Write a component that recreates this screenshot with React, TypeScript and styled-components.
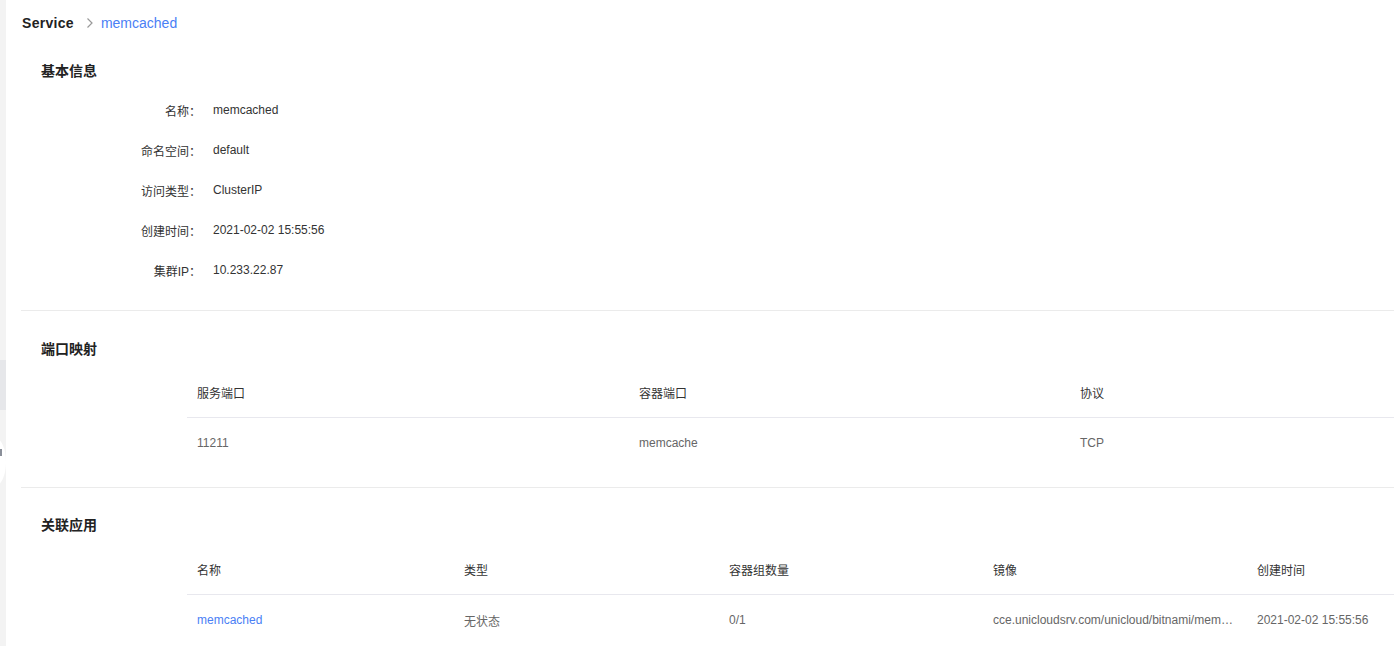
import React from "react";
import styled, { createGlobalStyle } from "styled-components";

const GlobalStyle = createGlobalStyle`
  html, body {
    margin: 0;
    padding: 0;
    overflow: hidden;
    background: #fff;
  }
  body {
    font-family: "Liberation Sans", Arial, "Noto Sans CJK SC", sans-serif;
    font-size: 12px;
    color: #333;
  }
`;

const Layout = styled.div`
  display: flex;
  width: 100vw;
  height: 100vh;
  overflow: hidden;
`;

const Rail = styled.div`
  position: relative;
  width: 6px;
  flex-shrink: 0;
  background: #f3f3f3;
  display: flex;
  flex-direction: column;
`;

const RailGap = styled.div<{ $h: number }>`
  height: ${(p) => p.$h}px;
`;

const RailActive = styled.div`
  height: 50px;
  background: #e6e7ea;
`;

const RailToggle = styled.div`
  position: absolute;
  top: 438px;
  left: -16px;
  width: 22px;
  height: 48px;
  border-radius: 50%;
  background: #fff;
  &::after {
    content: "";
    position: absolute;
    right: 4px;
    top: 11px;
    width: 2px;
    height: 7px;
    background: #8a8f99;
  }
`;

const Main = styled.div`
  flex: 1;
  min-width: 0;
  background: #fff;
`;

const Breadcrumb = styled.div`
  display: flex;
  align-items: center;
  height: 46px;
  padding-left: 16px;
  font-size: 14px;
`;

const CrumbRoot = styled.span`
  font-weight: 700;
  color: #222;
  letter-spacing: 0.3px;
`;

const CrumbSep = styled.span`
  display: flex;
  align-items: center;
  margin: 0 7px 0 12px;
  color: #999;
`;

const CrumbCurrent = styled.span`
  color: #4a80f5;
`;

const Section = styled.section<{ $top: number; $bottom?: number; $line?: boolean }>`
  margin-left: 15px;
  padding-top: ${(p) => p.$top}px;
  padding-bottom: ${(p) => p.$bottom ?? 0}px;
  border-top: ${(p) => (p.$line ? "1px solid #ebebeb" : "none")};
`;

const SectionTitle = styled.h3<{ $gap: number }>`
  margin: 0 0 ${(p) => p.$gap}px 0;
  padding-left: 20px;
  height: 20px;
  line-height: 20px;
  font-size: 14px;
  font-weight: 700;
  color: #222;
  font-family: "Noto Sans CJK SC", "Liberation Sans", sans-serif;
`;

const InfoRow = styled.div`
  display: flex;
  align-items: center;
  height: 40px;
  padding-top: 2px;
  box-sizing: border-box;
`;

const InfoLabel = styled.div`
  width: 180px;
  text-align: right;
  color: #333;
`;

const InfoValue = styled.div`
  padding-left: 12px;
  color: #333;
`;

const TableWrap = styled.div`
  margin-left: 166px;
`;

const Table = styled.table`
  border-collapse: collapse;
  table-layout: fixed;
  width: 100%;
`;

const Col = styled.col<{ $w?: number }>`
  width: ${(p) => (p.$w ? `${p.$w}px` : "auto")};
`;

const Th = styled.th`
  height: 50px;
  padding: 0 10px;
  text-align: left;
  font-weight: 400;
  color: #333;
  white-space: nowrap;
  border-bottom: 1px solid #e8e8ee;
`;

const Td = styled.td<{ $link?: boolean }>`
  height: 46px;
  padding: 2px 10px 0;
  color: ${(p) => (p.$link ? "#4a80f5" : "#666")};
  white-space: nowrap;
  overflow: hidden;
  text-overflow: ellipsis;
`;

const Chevron = () => (
  <svg width="8" height="12" viewBox="0 0 8 12" fill="none">
    <path d="M1.5 1.5 L6 6 L1.5 10.5" stroke="#999" strokeWidth="1.2" />
  </svg>
);

const info = [
  ["名称：", "memcached"],
  ["命名空间：", "default"],
  ["访问类型：", "ClusterIP"],
  ["创建时间：", "2021-02-02 15:55:56"],
  ["集群IP：", "10.233.22.87"],
];

const App: React.FC = () => {
  return (
    <>
      <GlobalStyle />
      <Layout>
        <Rail>
          <RailGap $h={360} />
          <RailActive />
          <RailToggle />
        </Rail>
        <Main>
          <Breadcrumb>
            <CrumbRoot>Service</CrumbRoot>
            <CrumbSep>
              <Chevron />
            </CrumbSep>
            <CrumbCurrent>memcached</CrumbCurrent>
          </Breadcrumb>

          <Section $top={14} $bottom={21}>
            <SectionTitle $gap={9}>基本信息</SectionTitle>
            {info.map(([label, value]) => (
              <InfoRow key={label}>
                <InfoLabel>{label}</InfoLabel>
                <InfoValue>{value}</InfoValue>
              </InfoRow>
            ))}
          </Section>

          <Section $line $top={27} $bottom={21}>
            <SectionTitle $gap={9}>端口映射</SectionTitle>
            <TableWrap>
              <Table>
                <colgroup>
                  <Col $w={442} />
                  <Col $w={441} />
                  <Col />
                </colgroup>
                <thead>
                  <tr>
                    <Th>服务端口</Th>
                    <Th>容器端口</Th>
                    <Th>协议</Th>
                  </tr>
                </thead>
                <tbody>
                  <tr>
                    <Td>11211</Td>
                    <Td>memcache</Td>
                    <Td>TCP</Td>
                  </tr>
                </tbody>
              </Table>
            </TableWrap>
          </Section>

          <Section $line $top={26}>
            <SectionTitle $gap={10}>关联应用</SectionTitle>
            <TableWrap>
              <Table>
                <colgroup>
                  <Col $w={267} />
                  <Col $w={265} />
                  <Col $w={264} />
                  <Col $w={264} />
                  <Col />
                </colgroup>
                <thead>
                  <tr>
                    <Th>名称</Th>
                    <Th>类型</Th>
                    <Th>容器组数量</Th>
                    <Th>镜像</Th>
                    <Th>创建时间</Th>
                  </tr>
                </thead>
                <tbody>
                  <tr>
                    <Td $link>memcached</Td>
                    <Td>无状态</Td>
                    <Td>0/1</Td>
                    <Td>cce.unicloudsrv.com/unicloud/bitnami/memcached:1.6.9</Td>
                    <Td>2021-02-02 15:55:56</Td>
                  </tr>
                </tbody>
              </Table>
            </TableWrap>
          </Section>
        </Main>
      </Layout>
    </>
  );
};

export default App;
